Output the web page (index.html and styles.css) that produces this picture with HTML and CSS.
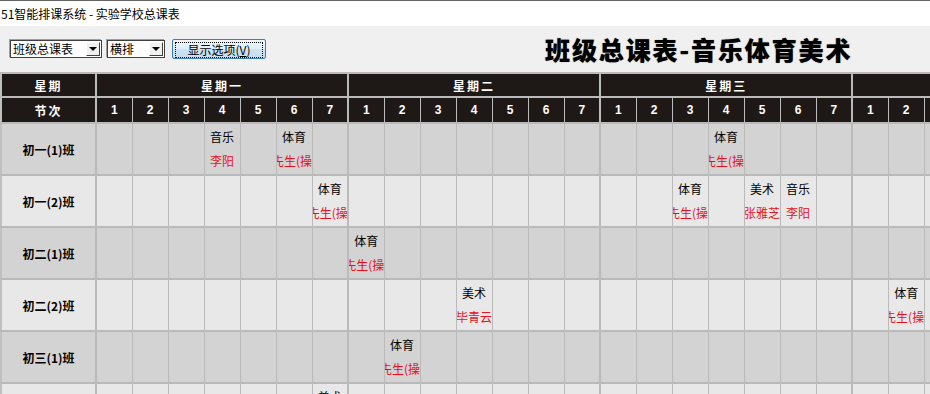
FILE: index.html
```html
<!DOCTYPE html>
<html lang="zh-CN">
<head>
    <meta charset="UTF-8">
    <title>51智能排课系统 - 实验学校总课表</title>
    <link rel="stylesheet" href="styles.css">
</head>
<body>
    <div class="titlebar">51智能排课系统 - 实验学校总课表</div>

    <div class="toolbar">
        <div class="combo combo-wide"><span class="combo-text">班级总课表</span><span class="combo-btn"><i></i></span></div>
        <div class="combo combo-short"><span class="combo-text">横排</span><span class="combo-btn"><i></i></span></div>
        <button class="btn"><span class="btn-focus">显示选项(<u>V</u>)</span></button>
        <h1 class="sheet-title">班级总课表-音乐体育美术</h1>
    </div>

    <div class="grid-wrap">
        <table class="grid" id="grid">
            <colgroup id="cols"></colgroup>
            <thead>
                <tr class="h-week" id="weekRow"><th class="name">星期</th></tr>
                <tr class="h-period" id="periodRow"><th class="name">节次</th></tr>
            </thead>
            <tbody id="body"></tbody>
        </table>
    </div>

    <script>
        const days = ['星期一', '星期二', '星期三', '星期四'];
        const periods = 7;
        const teacherPE = '王先生(操场)';

        // 课程: [天, 节次, 科目, 教师]
        const classes = [
            { name: '初一(1)班', lessons: [[0, 4, '音乐', '李阳'], [0, 6, '体育', teacherPE], [2, 4, '体育', teacherPE]] },
            { name: '初一(2)班', lessons: [[0, 7, '体育', teacherPE], [2, 3, '体育', teacherPE], [2, 5, '美术', '张雅芝'], [2, 6, '音乐', '李阳']] },
            { name: '初二(1)班', lessons: [[1, 1, '体育', teacherPE]] },
            { name: '初二(2)班', lessons: [[1, 4, '美术', '毕青云'], [3, 2, '体育', teacherPE]] },
            { name: '初三(1)班', lessons: [[1, 2, '体育', teacherPE]] },
            { name: '初三(2)班', lessons: [[0, 7, '美术', '毕青云']] }
        ];

        const cols = document.getElementById('cols');
        const weekRow = document.getElementById('weekRow');
        const periodRow = document.getElementById('periodRow');
        const body = document.getElementById('body');

        cols.innerHTML = '<col class="c-name">' + '<col class="c-period">'.repeat(days.length * periods);

        days.forEach(function (day) {
            weekRow.insertAdjacentHTML('beforeend', `<th colspan="${periods}" class="day">${day}</th>`);
            for (let p = 1; p <= periods; p++) {
                periodRow.insertAdjacentHTML('beforeend', `<th class="${p === 1 ? 'day' : ''}">${p}</th>`);
            }
        });

        classes.forEach(function (cls, i) {
            let html = `<tr class="${i % 2 === 0 ? 'odd' : 'even'}"><td class="name">${cls.name}</td>`;
            days.forEach(function (day, d) {
                for (let p = 1; p <= periods; p++) {
                    const lesson = cls.lessons.find(l => l[0] === d && l[1] === p);
                    let inner = '';
                    if (lesson) {
                        inner = `<div class="lesson"><span class="subject">${lesson[2]}</span><span class="teacher">${lesson[3]}</span></div>`;
                    }
                    html += `<td class="${p === 1 ? 'day' : ''}">${inner}</td>`;
                }
            });
            body.insertAdjacentHTML('beforeend', html + '</tr>');
        });
    </script>
</body>
</html>
```

FILE: styles.css
```css
html, body { margin: 0; padding: 0; }
body { width: 930px; height: 394px; overflow: hidden; background: #f0f0f0; font-family: "Noto Sans CJK SC", "Liberation Sans", sans-serif; font-size: 12px; color: #000; }

.titlebar { height: 25px; line-height: 25px; padding-left: 1px; background: #fff; border-top: 1px solid #646464; }

.toolbar { display: flex; align-items: center; height: 45px; padding-left: 10px; }
.combo { display: flex; height: 16px; background: #fff; border: 1px solid #404040; box-shadow: -1px -1px 0 #a0a0a0; margin-right: 5px; }
.combo-wide { width: 90px; }
.combo-short { width: 56px; margin-right: 7px; }
.combo-text { flex: 1; line-height: 16px; padding-left: 2px; white-space: nowrap; overflow: hidden; }
.combo-btn { width: 14px; height: 14px; margin: 1px 1px 0 0; background: #f0f0f0; border: 1px solid; border-color: #fff #404040 #404040 #fff; display: flex; align-items: center; justify-content: center; box-sizing: border-box; }
.combo-btn i { width: 0; height: 0; border-left: 4px solid transparent; border-right: 4px solid transparent; border-top: 4px solid #000; }

.btn { width: 94px; height: 20px; padding: 2px; border: 1px solid #3c7fb1; border-radius: 2px; background: linear-gradient(#eef6fb, #e0eef8 50%, #cfe4f3 50%, #c4ddef); font: inherit; font-size: 12px; cursor: default; }
.btn-focus { display: block; height: 14px; line-height: 14px; border: 1px dotted #000; }

.sheet-title { margin: 0 0 0 279px; font-size: 25px; font-weight: 900; letter-spacing: 1.9px; line-height: 30px; white-space: nowrap; text-shadow: 0 0 1px #555; }

.grid-wrap { width: 930px; overflow: hidden; }
.grid { border-collapse: collapse; table-layout: fixed; width: 1105px; border-left: 2px solid #c0c0c0; border-top: 2px solid #c0c0c0; margin-top: 1px; }
.c-name { width: 95px; }
.c-period { width: 36px; }

.grid th, .grid td { padding: 0; border: 1px solid #bababa; border-width: 2px 1px; text-align: center; overflow: hidden; }
.grid .day { border-left-width: 2px; }
.grid .name { border-right-width: 2px; }

.grid th { background: #1e1917; color: #fff; font-family: "Liberation Sans", "Noto Sans CJK SC", sans-serif; font-weight: bold; font-size: 12px; }
.grid th.name, .h-week th { letter-spacing: 2px; font-family: "Noto Sans CJK SC", sans-serif; }
.h-week th { height: 22px; }
.h-period th { height: 24px; }

.grid td { height: 50px; vertical-align: top; }
.grid td.name { vertical-align: middle; font-weight: bold; }
.odd td { background: #d3d3d3; }
.even td { background: #e8e8e8; }

.lesson { display: flex; flex-direction: column; align-items: center; width: 100%; overflow: hidden; padding-top: 1px; line-height: 24px; white-space: nowrap; }
.teacher { color: #e8101a; }
```
